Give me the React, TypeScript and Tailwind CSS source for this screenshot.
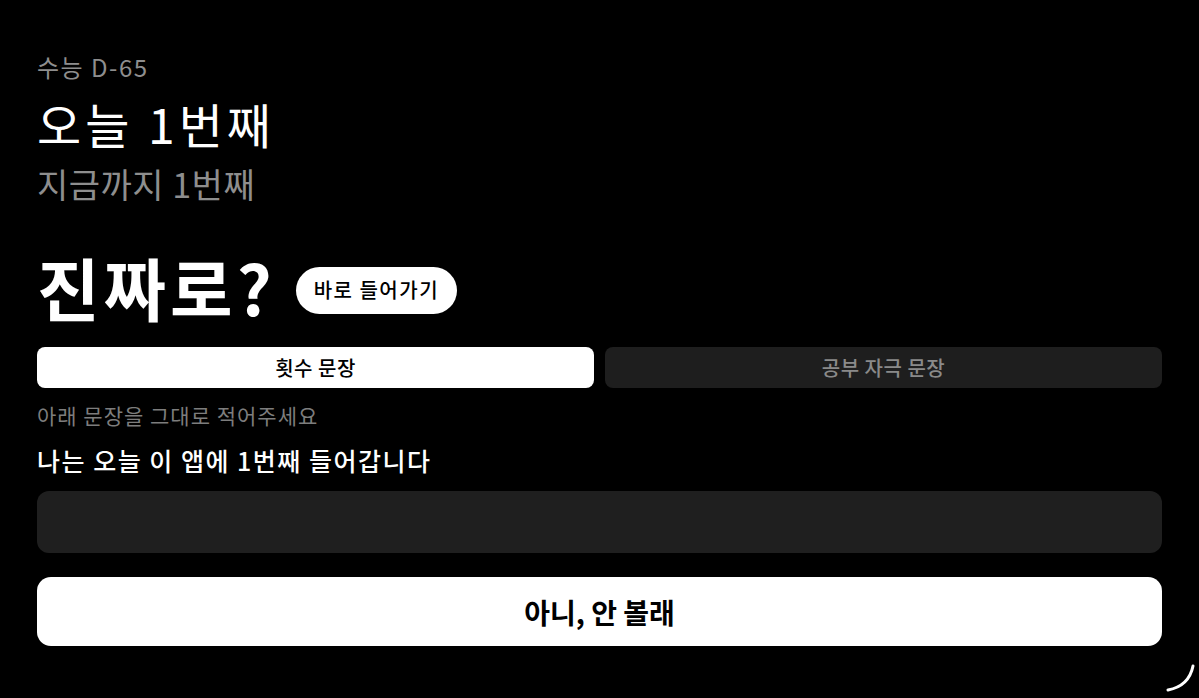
import React from 'react'

const font = { fontFamily: '"Noto Sans CJK KR", "Noto Sans", sans-serif' }

export default function App() {
  return (
    <div className="relative w-[1199px] h-[698px] overflow-hidden bg-black text-white" style={font}>
      <div className="flex flex-col px-[37px] pt-[52px]">
        <p className="text-[24px] leading-[30px] tracking-[1.5px] text-[#8e8e8e]">수능 D-65</p>
        <h1 className="mt-[12px] text-[48px] leading-[58px] tracking-[4px] font-normal">오늘 1번째</h1>
        <p className="mt-[10px] text-[34px] leading-[44px] tracking-[0.5px] text-[#8e8e8e]">지금까지 1번째</p>

        <div className="mt-[41px] flex items-center gap-[20px]">
          <h2 className="text-[68px] leading-[80px] font-bold tracking-[4px]">진짜로?</h2>
          <button className="mt-[6px] h-[47px] rounded-full bg-white px-[18px] text-[20px] tracking-[1.5px] font-medium text-black">
            바로 들어가기
          </button>
        </div>

        {/* Tabs */}
        <div className="mt-[20px] grid grid-cols-2 gap-[11px]">
          <button className="h-[41px] rounded-[8px] bg-white text-[20px] tracking-[0.5px] font-medium text-black">횟수 문장</button>
          <button className="h-[41px] rounded-[8px] bg-[#1e1e1e] text-[20px] tracking-[0.5px] font-medium text-[#8a8a8a]">공부 자극 문장</button>
        </div>

        <p className="mt-[12px] text-[21px] leading-[30px] tracking-[1px] text-[#7d7d7d]">아래 문장을 그대로 적어주세요</p>
        <p className="mt-[13px] text-[25px] leading-[34px] tracking-[1.5px] font-medium">나는 오늘 이 앱에 1번째 들어갑니다</p>

        <div className="mt-[14px] h-[62px] rounded-[12px] bg-[#1f1f1f]" />

        <button className="mt-[24px] h-[69px] rounded-[14px] bg-white text-[28px] font-bold text-black">
          아니, 안 볼래
        </button>
      </div>

      <svg className="absolute right-0 bottom-0" width="40" height="40" viewBox="1159 658 40 40">
        <path d="M1193 666 Q1189 686 1168 690" fill="none" stroke="white" strokeWidth="3" strokeLinecap="round" />
      </svg>
    </div>
  )
}
